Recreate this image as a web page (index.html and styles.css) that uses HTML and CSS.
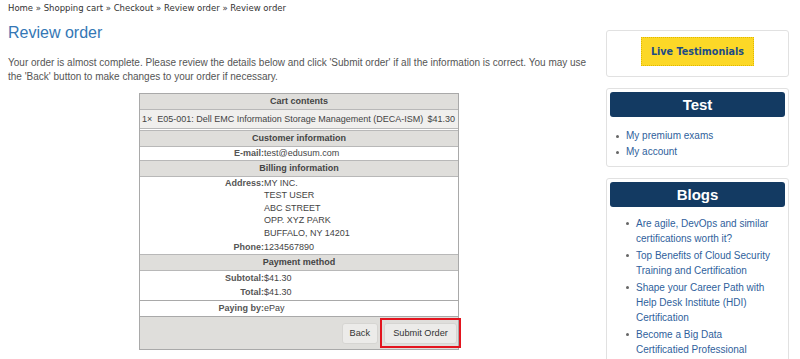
FILE: index.html
```html
<!DOCTYPE html>
<html>
<head>
<meta charset="utf-8">
<link rel="stylesheet" href="styles.css">
</head>
<body>
<div class="page">
  <main class="main">
    <div class="crumbs">Home » Shopping cart » Checkout » Review order » Review order</div>
    <h1 class="title">Review order</h1>
    <p class="intro">Your order is almost complete. Please review the details below and click 'Submit order' if all the information is correct. You may use the 'Back' button to make changes to your order if necessary.</p>
    <div class="review">
      <div class="head">Cart contents</div>
      <div class="item"><span>1×&nbsp; E05-001: Dell EMC Information Storage Management (DECA-ISM)</span><span>$41.30</span></div>
      <div class="head sep">Customer information</div>
      <div class="pair email"><span class="lbl">E-mail:</span><span>test@edusum.com</span></div>
      <div class="head">Billing information</div>
      <div class="block addr">
        <div class="pair"><span class="lbl">Address:</span><span>MY INC.<br>TEST USER<br>ABC STREET<br>OPP. XYZ PARK<br>BUFFALO, NY 14201</span></div>
        <div class="pair phone"><span class="lbl">Phone:</span><span>1234567890</span></div>
      </div>
      <div class="head">Payment method</div>
      <div class="block totals">
        <div class="pair"><span class="lbl">Subtotal:</span><span>$41.30</span></div>
        <div class="pair"><span class="lbl">Total:</span><span>$41.30</span></div>
      </div>
      <div class="pair paying"><span class="lbl">Paying by:</span><span>ePay</span></div>
      <div class="actions">
        <button class="btn">Back</button>
        <span class="highlight"><button class="btn">Submit Order</button></span>
      </div>
    </div>
  </main>
  <aside class="side">
    <div class="box live"><span class="live-btn">Live Testimonials</span></div>
    <div class="box">
      <div class="box-head">Test</div>
      <ul class="links">
        <li>My premium exams</li>
        <li>My account</li>
      </ul>
    </div>
    <div class="box">
      <div class="box-head">Blogs</div>
      <ul class="links blogs">
        <li>Are agile, DevOps and similar certifications worth it?</li>
        <li>Top Benefits of Cloud Security Training and Certification</li>
        <li>Shape your Career Path with Help Desk Institute (HDI) Certification</li>
        <li>Become a Big Data Certificatied Professional</li>
      </ul>
    </div>
  </aside>
</div>
</body>
</html>
```

FILE: styles.css
```css
html, body {
  margin: 0;
  padding: 0;
  background: #fff;
  overflow: hidden;
}
.page {
  display: flex;
  gap: 16px;
  padding: 0 11px 0 8px;
  font-family: "Liberation Sans", Arial, sans-serif;
  color: #555;
}
.main {
  width: 582px;
  flex: none;
}
.crumbs {
  font-family: "DejaVu Sans", Verdana, sans-serif;
  font-size: 8.5px;
  line-height: 10px;
  color: #333;
  padding-top: 3px;
}
.title {
  margin: 10px 0 0;
  font-size: 16px;
  line-height: 20px;
  font-weight: normal;
  color: #3477b5;
}
.intro {
  margin: 13px 0 0;
  font-size: 10px;
  line-height: 14px;
  color: #555;
}
.review {
  width: 318px;
  margin: 9px auto 0;
  border: 1px solid #a9a9a9;
  font-size: 9px;
  color: #444;
}
.head {
  height: 15px;
  line-height: 15px;
  text-align: center;
  font-weight: bold;
  background: #dfdedb;
  border-bottom: 1px solid #b8b8b8;
}
.head.sep {
  border-top: 1px solid #b8b8b8;
  margin-top: 1px;
}
.item {
  display: flex;
  justify-content: space-between;
  white-space: nowrap;
  height: 18px;
  line-height: 18px;
  padding: 0 3px 0 2px;
  background: #f0efed;
  border-bottom: 1px solid #b8b8b8;
}
.pair {
  display: grid;
  grid-template-columns: 124px 1fr;
  line-height: 12.4px;
}
.lbl {
  text-align: right;
  font-weight: bold;
  color: #555;
}
.email {
  height: 13px;
  line-height: 13px;
  border-bottom: 1px solid #b8b8b8;
}
.block {
  display: flex;
  flex-direction: column;
}
.addr {
  padding: 0 0 1px;
  gap: 1.6px;
  border-bottom: 1px solid #b8b8b8;
}
.totals {
  padding: 1px 0 2px;
  gap: 2px;
  border-bottom: 1px solid #a9a9a9;
}
.totals .pair, .paying {
  line-height: 12px;
}
.paying {
  padding: 1px 0 2px;
  border-bottom: 1px solid #a9a9a9;
}
.actions {
  display: flex;
  justify-content: flex-end;
  align-items: center;
  gap: 2px;
  height: 32px;
  background: #dfdedb;
}
.btn {
  font-family: "Liberation Sans", Arial, sans-serif;
  font-size: 9.2px;
  color: #333;
  background: #ecebe9;
  border: 1px solid #d6d5d2;
  border-radius: 3px;
  height: 21px;
  padding: 0 7px;
}
.highlight {
  display: flex;
  align-items: center;
  justify-content: center;
  height: 30px;
  padding: 0 2px;
  margin-right: -3px;
  border: 2px solid #e3141e;
  box-sizing: border-box;
}
.highlight .btn {
  width: 73px;
  padding: 0;
}
.side {
  width: 183px;
  flex: none;
  padding-top: 30px;
  display: flex;
  flex-direction: column;
  gap: 11px;
}
.box {
  border: 1px solid #e1e1e1;
  border-radius: 3px;
  padding: 3px 3px 6px;
}
.live {
  display: flex;
  justify-content: center;
  padding: 6px 0 10px;
}
.live-btn {
  background: #fcd827;
  border: 1px dotted #e0b800;
  color: #1d4c86;
  font-family: "DejaVu Sans", Verdana, sans-serif;
  font-weight: bold;
  font-size: 9.6px;
  line-height: 27px;
  padding: 0 9px;
}
.box-head {
  background: #133a62;
  color: #fff;
  border-radius: 3px;
  height: 25px;
  line-height: 25px;
  text-align: center;
  font-weight: bold;
  font-size: 15px;
}
.links {
  margin: 11px 0 0;
  padding: 0 0 0 16px;
  list-style: none;
  font-size: 10px;
  line-height: 16px;
  color: #2f5f9c;
}
.links li {
  position: relative;
}
.links li::before {
  content: "";
  position: absolute;
  left: -10px;
  top: 7px;
  width: 3px;
  height: 3px;
  border-radius: 50%;
  background: #666;
}
.blogs {
  margin-top: 9px;
  padding: 0 11px 0 26px;
  font-size: 10px;
  line-height: 15px;
}
.blogs li {
  margin-bottom: 2px;
}
.blogs li::before {
  top: 6px;
}
```
